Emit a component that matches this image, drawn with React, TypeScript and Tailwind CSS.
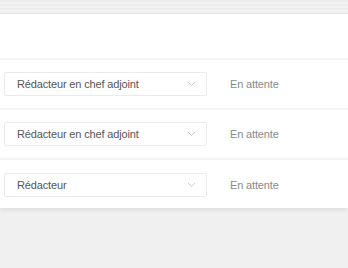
const rows = [
  { role: "Rédacteur en chef adjoint", status: "En attente" },
  { role: "Rédacteur en chef adjoint", status: "En attente" },
  { role: "Rédacteur", status: "En attente" },
];

function Chevron() {
  return (
    <svg width="9" height="6" viewBox="0 0 9 6" fill="none" className="text-[#cccccc]">
      <path d="M1 1l3.5 3.5L8 1" stroke="currentColor" strokeWidth="1" />
    </svg>
  );
}

export default function App() {
  return (
    <div className="w-[348px] h-[268px] overflow-hidden bg-[#f0f0f0] font-['Liberation_Sans',Arial,sans-serif]">
      <div className="h-[14px] bg-[repeating-linear-gradient(180deg,#ededed_0px,#ededed_2px,#f2f2f2_2px,#f2f2f2_4px)] border-b border-[#e8e8e8]" />
      <div className="bg-white shadow-[0_2px_5px_rgba(0,0,0,0.08)]">
        <div className="h-[46px] border-b-2 border-[#f4f4f4]" />
        {rows.map((r, i) => (
          <div
            key={i}
            className={
              i < rows.length - 1
                ? "h-[50px] flex items-center pl-[4px] border-b-2 border-[#f4f4f4]"
                : "h-[48px] pt-[2px] flex items-center pl-[4px]"
            }
          >
            <div className="w-[203px] h-[24px] border border-[#ebebeb] rounded-[2px] flex items-center justify-between pl-[12px] pr-[10px]">
              <span className="text-[11px] tracking-[-0.15px] text-[#555]">{r.role}</span>
              <Chevron />
            </div>
            <span className="ml-[23px] text-[11px] tracking-[-0.15px] text-[#8a8a8a]">{r.status}</span>
          </div>
        ))}
      </div>
    </div>
  );
}
